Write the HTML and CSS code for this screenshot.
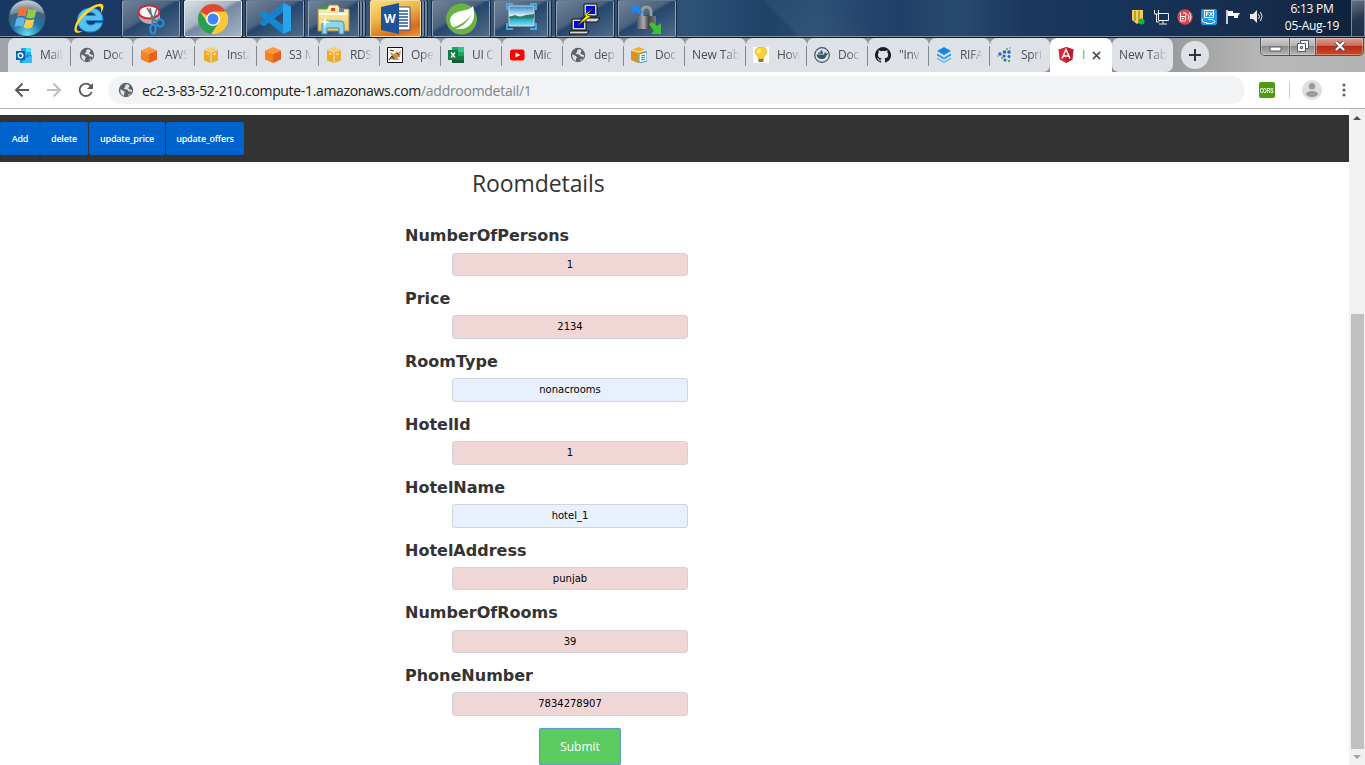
FILE: index.html
```html
<!DOCTYPE html>
<html lang="en">
<head>
<meta charset="utf-8">
<title>Roomdetails</title>
<link rel="stylesheet" href="styles.css">
</head>
<body>
<svg class="defs" width="0" height="0">
  <defs>
    <symbol id="globe" viewBox="0 0 16 16"><circle cx="8" cy="8" r="7.200" fill="#5f6368"/><path d="M2.400 7.200 5.800 9 7 10.300 6 12v2C3.400 13 1.800 10.300 2.400 7.200zM9 2l-2 1.500.3 1.300L5.600 6.500 7 7.300l2.200.2 1.600 2 3 .3-1.300 2.400-1.700-.1-.7 1.700c2.500-.5 4.200-3 4-5.600l-2-.6-1.900-1L11 5l.5-1.700z" fill="#dee1e6"/></symbol>
    <symbol id="cube" viewBox="0 0 16 16"><path d="M8 0 16 3.500 8 7 0 3.500z" fill="#fa9a3c"/><path d="M0 3.500 8 7v9l-8-3.500z" fill="#f58220"/><path d="M16 3.500 8 7v9l8-3.500z" fill="#e8601e"/></symbol>
    <symbol id="box" viewBox="0 0 16 16"><path d="M8 0 15 2.500 8 5 1 2.500z" fill="#f7cf72"/><path d="M1 3.300 7.500 5.600V16L1 13.600z" fill="#f0aa20"/><path d="M15 3.300 8.500 5.600V16L15 13.600z" fill="#edae2c"/><path d="m3 5.700 3 1v1.500l-3-1zm7 1 3-1v1.500l-3 1z" fill="#fce7af"/></symbol>
    <radialGradient id="orb" cx=".5" cy=".95" r=".9"><stop offset="0" stop-color="#62e0f5"/><stop offset=".45" stop-color="#2374a6"/><stop offset=".8" stop-color="#456078"/><stop offset="1" stop-color="#a8b5c1"/></radialGradient>
    <linearGradient id="folder" x2="0" y2="1"><stop stop-color="#fff3c0"/><stop offset="1" stop-color="#edc761"/></linearGradient>
    <linearGradient id="sky" x2="0" y2="1"><stop stop-color="#2d84c4"/><stop offset=".5" stop-color="#e1f5fb"/><stop offset=".56" stop-color="#27734f"/><stop offset=".68" stop-color="#22b1cf"/><stop offset="1" stop-color="#8be1ee"/></linearGradient>
    <linearGradient id="metal"><stop stop-color="#555"/><stop offset=".35" stop-color="#aaa"/><stop offset=".6" stop-color="#444"/><stop offset="1" stop-color="#777"/></linearGradient>
  </defs>
</svg>

<header class="taskbar">
  <div class="launch start"><svg width="40" height="37" viewBox="0 0 40 37"><circle cx="20" cy="18" r="18.500" fill="url(#orb)" stroke="#244668"/><path d="M3 15C4 4 12 1 20 1s16 4 17 13c-10-5-22-3-34 1z" fill="#fff" opacity=".3"/><path d="M12.500 8q4-3 8 0l-2 9q-4-2.500-8.500 0z" fill="#ef7336"/><path d="M21.500 9q4 2 8.500-.5l-2.500 9q-4 2-8.500 0z" fill="#92c84a"/><path d="M9.500 18.500q4-2.500 8.500 0l-2 8.500q-4-2.500-8.500 0z" fill="#65b6ed"/><path d="M19 19q4 2 8.500 0l-2.500 8.500q-4 2-8.500 0z" fill="#fccf47"/></svg></div>
  <div class="launch ie"><svg width="34" height="34" viewBox="0 0 34 34"><path d="M31 18.500H14c.3 3 2 4.500 5 4.500 2 0 3.600-.8 4.300-2.200H30.500C29 26.500 24.500 30 18.500 30 10.500 30 5.500 25 5.500 18S11 6 18.500 6C26 6 31 10.500 31 18.500zm-7.500-5c-.5-2-2.200-3-4.700-3-2.500 0-4.200 1-4.800 3z" fill="#56c0f3" stroke="#1689d4"/><path d="M29 11C33 5 32 1 27 2 18 3 6 14 3 24c-2 6 1 9 8 5-9 2-7-5-2-11C14 11 26 2 28.500 5c.6 1 .7 3 .5 6z" fill="#ffd62a"/></svg></div>
  <div class="task"><svg width="32" height="32" viewBox="0 0 32 32"><path d="M4 9v5c3 9 18 9 21 1V9z" fill="#b9a9b2"/><ellipse cx="14" cy="9" rx="10.500" ry="6.500" fill="#f6f7fb" stroke="#d62632" stroke-width="2"/><path d="m12 5 9 14M22 5 17 21M15 5l3 16" stroke="#66737f" stroke-width="1.600"/><circle cx="25" cy="20" r="3.500" fill="none" stroke="#2791dc" stroke-width="2"/><ellipse cx="18" cy="26" rx="2.600" ry="4.500" fill="none" stroke="#2791dc" stroke-width="2"/></svg></div>
  <div class="task focused"><svg width="30" height="30" viewBox="0 0 30 30"><circle cx="15" cy="15" r="15" fill="#fbc52e"/><path d="M15 15 2 7.500A15 15 0 0 1 28 7.700H15z" fill="#df4938"/><path d="M2 7.500A15 15 0 0 0 13.500 30L21 18.500 15 21l-6-3z" fill="#27a052"/><path d="M28 7.700H15L21 18.500 13.500 30A15 15 0 0 0 28 7.700z" fill="#fdc838"/><circle cx="15" cy="15" r="7" fill="#fff"/><circle cx="15" cy="15" r="5.500" fill="#4285f4"/></svg></div>
  <div class="task"><svg width="33" height="33" viewBox="0 0 33 33"><path d="m24 1 8 3.500v24L24 32z" fill="#26a5ee"/><path d="M24 1v9L5 24.500 1 22.200v-2z" fill="#1782cb"/><path d="M1 11.500 5 9l19 14v9L1 13.500z" fill="#1388d5"/></svg></div>
  <div class="task stacked"><svg width="33" height="32" viewBox="0 0 33 32"><path d="M1 6h9l2-4h9l2 4h9v22H1z" fill="url(#folder)" stroke="#a38b40"/><path d="M5 3h4v3H5z" fill="#22a641"/><path d="M14 5h4v3h-4z" fill="#df4725"/><path d="M22 6h5v3h-5z" fill="#2a91e5"/><path d="M2 11h29" stroke="#fffbe0" stroke-width="2"/><path d="M5 31V21q0-3 4-3h14q4 0 4 3v10h-5v-6H10v6z" fill="#8cd6ef" stroke="#438db4"/><path d="m8 13 1 5 5 1-5 1-1 6-1-6-5-1 5-1z" fill="#fff"/></svg></div>
  <div class="task word stacked"><svg width="30" height="31" viewBox="0 0 30 31"><path d="M16 4h13v23H16z" fill="#fff" stroke="#2b579a"/><path d="M18 8h9M18 11h9M18 14h9M18 17h9M18 20h9M18 23h9" stroke="#2b579a" stroke-width="1.300"/><path d="m0 4 18-4v31L0 27z" fill="#1e5299"/><text class="glyph" x="3" y="20">W</text></svg></div>
  <div class="task"><svg width="33" height="33" viewBox="0 0 33 33"><circle cx="16.500" cy="17" r="15.500" fill="#69b245"/><path d="M28 4C24 10 9 7 5.500 16 4 22 8 27 12 27c13 1 20-8 16-23z" fill="#fff"/><path d="M6 28q15-3 20-15-6 9-20 13z" fill="#69b245"/></svg></div>
  <div class="task stacked narrow"><svg width="31" height="27" viewBox="0 0 31 27"><path d="M3 3h25v20H3z" fill="url(#sky)" stroke="#ccd9e2"/><path d="m3 14 6-2 5 2 6-2 8-1v4H3z" fill="#347a61"/><path d="M1 7V1h6m17 0h6v6m0 13v6h-6M7 26H1v-6" fill="none" stroke="#45a7e6" stroke-width="2"/></svg></div>
  <div class="task"><svg width="32" height="32" viewBox="0 0 32 32"><g fill="#d4d4cc" stroke="#111"><path d="M15 1h13v12H15zM13 15h18l-3 4H11zM3 16h14v11H3zM1 28h19l-2 3H0z"/></g><path d="M17 3h9v8h-9zM5 18h10v7H5z" fill="#0008e8"/><path d="m24 5-9 7 2 1-9 10 14-10-4-1z" fill="#ff0" stroke="#343400" stroke-width=".7"/></svg></div>
  <div class="task"><svg width="32" height="32" viewBox="0 0 32 32"><path d="M11 15V9q0-5 4.500-5T20 9v6" fill="none" stroke="#9a9a9a" stroke-width="3"/><path d="M6 13h19v13H6z" fill="#777"/><path d="M6 13h19v13H6z" fill="url(#metal)"/><path d="M1 2h9L8 5l4 4-3 3-5-4-3 3z" fill="#2185ec"/><path d="m18 21 3-2 5 4 4-3v11H20l3-3z" fill="#35c632"/></svg></div>
  <div class="tray">
    <svg width="14" height="16" viewBox="0 0 14 16"><path d="M1 1h11v10l-6 4-5-4z" fill="#f0cf57"/><path d="M4 2v10M8 2v11" stroke="#8b6b1f"/><circle cx="10.500" cy="12.500" r="3" fill="#19af3c"/></svg>
    <svg width="16" height="16" viewBox="0 0 16 16" fill="none" stroke="#eee"><path d="M5.500 4.500h10v7h-10zM10 12v3m-4 0h8M1.500 1v4h4V1M3.500 5v8h3"/></svg>
    <svg width="16" height="16" viewBox="0 0 16 16"><circle cx="8" cy="8" r="7.700" fill="#d9454b"/><path d="M3.500 3.500V12h5V7.500h-5M5 9.500h2M6 4h3v3m2-1.500q2 2.500 0 5m1.500-7q3 4.500 0 9" fill="none" stroke="#fff"/></svg>
    <svg width="16" height="16" viewBox="0 0 16 16"><rect width="16" height="16" rx="2" fill="#2398e5"/><path d="M3.500 1.500h9v7h-9zM7.500 3H5.500v4m0-2h2M8.500 3l3 4m0-4-3 4M2 9.500l-1 2 2 2h3m-1 1h6l3-2-2-2H7" fill="none" stroke="#fff"/></svg>
    <svg width="16" height="16" viewBox="0 0 16 16"><path d="M2 1v14" stroke="#fff" stroke-width="1.500"/><path d="M3 2h5v2h7l-2 3v2H9V7H3z" fill="#fff"/></svg>
    <svg width="16" height="16" viewBox="0 0 16 16"><path d="M1 5h3l4-4v13l-4-4H1z" fill="#e8e8e8"/><path d="M9.500 5q2 3 0 5m2-7q3 4 0 9" fill="none" stroke="#e8e8e8"/></svg>
  </div>
  <div class="clock"><span>6:13 PM</span><span>05-Aug-19</span></div>
  <div class="peek"></div>
</header>

<div class="tabstrip">
  <div class="tab first"><svg class="ico" viewBox="0 0 16 16"><path d="M5 1h10v9H5z" fill="#28a8ea"/><path d="M10 1h5v4h-5z" fill="#50d9ff"/><path d="M4 8h12v8H4z" fill="#1490df"/><path d="m8 12 8-4v8H6z" fill="#35baf2"/><path d="M0 4h9v9H0z" fill="#0364b8"/><circle cx="4.500" cy="8.500" r="2.300" fill="none" stroke="#fff" stroke-width="1.400"/></svg><span class="cap">Mail</span></div>
  <div class="tab wide"><svg class="ico"><use href="#globe"/></svg><span class="cap">Doc</span></div>
  <div class="tab wide"><svg class="ico"><use href="#cube"/></svg><span class="cap">AWS</span></div>
  <div class="tab wide"><svg class="ico"><use href="#box"/></svg><span class="cap">Insta</span></div>
  <div class="tab wide"><svg class="ico"><use href="#cube"/></svg><span class="cap">S3 M</span></div>
  <div class="tab"><svg class="ico"><use href="#box"/></svg><span class="cap">RDS</span></div>
  <div class="tab"><svg class="ico" viewBox="0 0 16 16"><path d="M.5.500h15v15H.5z" fill="#fff" stroke="#111"/><path d="M2 12 5 9 2 5l5 2 3-3 1 2 3-3-1 7-3 1 3 2H8z" fill="#c79542"/><path d="m2 13 3-4 2 3m3-6 2 2M7 4 3 3" stroke="#222" fill="none"/></svg><span class="cap">Ope</span></div>
  <div class="tab"><svg class="ico" viewBox="0 0 16 16"><path d="M4 0h12v16H4z" fill="#21a366"/><path d="M10 0h6v5h-6z" fill="#33c481"/><path d="M4 10h12v6H4z" fill="#185c37"/><path d="M10 9h6v4h-6z" fill="#107c41"/><path d="M0 3h10v10H0z" fill="#107c41"/><path d="m3 5.500 4 5m0-5-4 5" stroke="#fff" stroke-width="1.500"/></svg><span class="cap">UI C</span></div>
  <div class="tab"><svg class="ico" viewBox="0 0 16 16"><rect x="1" y="2.500" width="14.500" height="11" rx="2.500" fill="#f00"/><path d="m6.500 5.500 5 2.500-5 2.500z" fill="#fff"/></svg><span class="cap">Mic</span></div>
  <div class="tab"><svg class="ico"><use href="#globe"/></svg><span class="cap">dep</span></div>
  <div class="tab"><svg class="ico" viewBox="0 0 16 16"><path d="M0 3 8 0l7 3v10l-7 3-8-3z" fill="#f3ae2e"/><path d="m0 3 7 2v11l-7-3z" fill="#dd9120"/><path d="m0 3 7 2 8-2" stroke="#fff2c8" fill="none"/><path d="m8 7 8-2v9l-8 2z" fill="#fff" stroke="#3794ca"/><path d="m10 9 4-1m-4 3 4-1m-4 3 4-1" stroke="#277bb4"/></svg><span class="cap">Doc</span></div>
  <div class="tab"><span class="cap long">New Tab</span></div>
  <div class="tab"><svg class="ico" viewBox="0 0 16 16"><path d="M0 0h16v16H0z" fill="#fff"/><path d="M8 0c7 0 7 7 3 9l-.5 3h-5L5 9C0 6 2 0 8 0z" fill="#ffd22c" stroke="#d89a0f" stroke-width=".6"/><path d="M5.500 12h5v3h-5z" fill="#777"/><ellipse cx="6" cy="4" rx="2" ry="2.500" fill="#fff27a"/></svg><span class="cap">How</span></div>
  <div class="tab"><svg class="ico" viewBox="0 0 16 16"><circle cx="8" cy="8" r="7.300" fill="#dee1e6" stroke="#38566a" stroke-width="1.200"/><path d="M2.500 7.500H10l1-3 1 2 2.500-.5-2 2.200C11.500 13.500 3 13.500 2.500 7.500zM4 5.500h5v1.300H4zM6.500 3.500h2v2h-2z" fill="#38566a"/></svg><span class="cap">Doc</span></div>
  <div class="tab"><svg class="ico" viewBox="0 0 16 16"><path fill="#1b1f23" d="M8 0a8 8 0 0 0-2.530 15.590c.4.070.55-.17.55-.38v-1.490c-2.010.37-2.530-.49-2.690-.94-.09-.23-.48-.94-.82-1.130-.28-.15-.68-.52-.01-.53.630-.01 1.080.58 1.230.82.720 1.210 1.870.87 2.330.66.070-.52.280-.87.510-1.070-1.780-.2-3.640-.89-3.640-3.950 0-.87.310-1.590.82-2.150-.08-.2-.36-1.020.08-2.120 0 0 .67-.21 2.200.82a7.500 7.500 0 0 1 4 0c1.530-1.040 2.200-.82 2.200-.82.440 1.100.160 1.920.080 2.120.51.560.82 1.270.82 2.150 0 3.070-1.870 3.750-3.650 3.950.29.250.54.730.54 1.480v2.200c0 .210.150.460.550.38A8 8 0 0 0 8 0z"/></svg><span class="cap">"Inv</span></div>
  <div class="tab"><svg class="ico" viewBox="0 0 16 16"><path d="m8 0 7 4-7 4-7-4z" fill="#1686ef"/><path d="m1 6.500 7 4 7-4v2l-7 4-7-4z" fill="#2b96f5"/><path d="m1 10.500 7 4 7-4v1.500l-7 4-7-4z" fill="#5bb4fb"/></svg><span class="cap">RIFA</span></div>
  <div class="tab last"><svg class="ico" viewBox="0 0 16 16"><g fill="#1b68c7"><circle cx="3" cy="7" r="1.700"/><circle cx="7.500" cy="5" r="1.800"/><circle cx="12" cy="5" r="1.800"/><circle cx="7" cy="9" r="1.600"/><circle cx="12" cy="9.500" r="1.500"/><circle cx="8" cy="13" r="1.500"/></g><g fill="#64a839"><circle cx="1" cy="9" r=".8"/><circle cx="10" cy="2" r="1"/><circle cx="13" cy="1" r=".8"/><circle cx="5" cy="11" r="1"/><circle cx="12" cy="14" r="1.200"/></g></svg><span class="cap">Spri</span></div>
  <div class="tab active"><svg class="ico" viewBox="0 0 16 16"><path d="m8 0 7.500 2.500-1.200 10L8 16l-6.300-3.500-1.200-10z" fill="#dd2335"/><path d="m8 0 7.500 2.500-1.200 10L8 16z" fill="#bd1c2c"/><path d="m4 11.500 4-9 4 9M5.500 9h5" fill="none" stroke="#fff" stroke-width="1.500"/></svg><span class="cap tiny">I</span><svg class="close" width="9" height="9" viewBox="0 0 10 10"><path d="m1 1 8 8m0-8-8 8" stroke="#44484c" stroke-width="1.700"/></svg></div>
  <div class="tab idle"><span class="cap long">New Tab</span></div>
  <div class="newtab"><svg width="12" height="12" viewBox="0 0 12 12"><path d="M6 0v12M0 6h12" stroke="#303438" stroke-width="2"/></svg></div>
  <div class="winbtns">
    <div class="win min"><svg width="13" height="6" viewBox="0 0 13 6"><path d="M1 1h11v4H1z" fill="#fff" stroke="#555a66"/></svg></div>
    <div class="win max"><svg width="12" height="12" viewBox="0 0 12 12"><path d="M3.500.5h8v8h-8z" fill="#fff" stroke="#555a66"/><path d="M.5 3.500h8v8h-8z" fill="#fff" stroke="#555a66"/><path d="M3.500 6.500h2v2h-2z" fill="#ccc" stroke="#555a66"/></svg></div>
    <div class="win exit"><svg width="12" height="10" viewBox="0 0 12 10"><path d="m2 1 8 8m0-8L2 9" stroke="#50405b" stroke-width="4"/><path d="m2 1 8 8m0-8L2 9" stroke="#fff" stroke-width="2.300"/></svg></div>
  </div>
</div>

<div class="toolbar">
  <svg class="back" width="16" height="16" viewBox="0 0 16 16" fill="none" stroke="#55595d" stroke-width="1.900"><path d="M15 8H2m6.500-6.500L2 8l6.500 6.500"/></svg>
  <svg class="fwd" width="16" height="16" viewBox="0 0 16 16" fill="none" stroke="#bbbdbf" stroke-width="1.900"><path d="M1 8h13M7.500 1.500 14 8l-6.500 6.500"/></svg>
  <svg class="reload" width="16" height="16" viewBox="0 0 16 16"><path d="M13.700 10A6.200 6.200 0 1 1 12.500 3.700L14 5.500" fill="none" stroke="#55595d" stroke-width="1.900"/><path d="M15 1v6H9z" fill="#55595d"/></svg>
  <div class="omnibox"><svg class="site"><use href="#globe"/></svg><span class="host">ec2-3-83-52-210.compute-1.amazonaws.com</span><span class="path">/addroomdetail/1</span></div>
  <div class="cors"><span class="corstext">CORS</span></div>
  <div class="rule"></div>
  <svg class="avatar" width="20" height="20" viewBox="0 0 20 20"><circle cx="10" cy="10" r="10" fill="#dedede"/><circle cx="10" cy="6.200" r="3.200" fill="#9b9b9b"/><ellipse cx="10" cy="14" rx="6" ry="2.900" fill="#9b9b9b"/></svg>
  <svg class="menu" width="4" height="14" viewBox="0 0 4 14" fill="#5f6368"><circle cx="2" cy="2" r="1.600"/><circle cx="2" cy="7" r="1.600"/><circle cx="2" cy="12" r="1.600"/></svg>
</div>

<div class="viewport">
  <main class="page">
    <nav class="navbar">
      <button class="btn add">Add</button><button class="btn delete">delete</button><button class="btn price">update_price</button><button class="btn offers">update_offers</button>
    </nav>
    <h1 class="title">Roomdetails</h1>
    <form class="form">
      <div class="field"><label>NumberOfPersons</label><div class="control">1</div></div>
      <div class="field"><label>Price</label><div class="control">2134</div></div>
      <div class="field"><label>RoomType</label><div class="control autofill">nonacrooms</div></div>
      <div class="field"><label>HotelId</label><div class="control">1</div></div>
      <div class="field"><label>HotelName</label><div class="control autofill">hotel_1</div></div>
      <div class="field"><label>HotelAddress</label><div class="control">punjab</div></div>
      <div class="field"><label>NumberOfRooms</label><div class="control">39</div></div>
      <div class="field"><label>PhoneNumber</label><div class="control">7834278907</div></div>
      <button class="submit" type="button">Submit</button>
    </form>
  </main>
  <div class="scrollbar">
    <svg width="8" height="4" viewBox="0 0 8 4"><path d="m0 4 4-4 4 4z" fill="#505050"/></svg>
    <div class="thumb"></div>
    <svg width="8" height="4" viewBox="0 0 8 4"><path d="m0 0 4 4 4-4z" fill="#a3a3a3"/></svg>
  </div>
</div>
</body>
</html>
```
FILE: styles.css
```css
* { box-sizing: border-box; }
html, body { margin: 0; height: 765px; overflow: hidden; }
body { display: flex; flex-direction: column; background: #fff; font-family: "Open Sans", "Noto Sans", sans-serif; }
svg { display: block; flex: none; }
.defs { position: absolute; }

/* Taskbar */
.taskbar {
  display: flex; flex: none; height: 38px; padding-left: 7px;
  border-bottom: 1px solid #101820;
  box-shadow: inset 0 -1px #8291a3;
  background: linear-gradient(45deg, transparent 57%, #ffffff0c 57.100%, transparent 63%),
    linear-gradient(90deg, #183862 0, #1b3963 9%, #3a5572 20%, #36536f 45%, #2c5278 51%, #1e4168 56%, #2b4d74 60%, #203f68 66%, #294a70 70%, #1c385e 75%, #16335a 82%, #172d4d 92%, #0e2039 100%);
}
.launch { display: flex; align-items: center; justify-content: center; height: 37px; }
.start { width: 40px; }
.ie { width: 34px; margin-left: 25px; margin-right: 16px; }
.task {
  display: flex; align-items: center; justify-content: center;
  width: 58px; height: 37px; margin-right: 4px;
  border: 1px solid #93a2b4; border-top-color: #63788f; border-radius: 2px;
  background: linear-gradient(150deg, #718398 0, #4c637f 42%, #25466d 48%, #4f6b88 100%);
  box-shadow: 0 0 0 1px #142a45;
}
.focused { background: linear-gradient(150deg, #d9dfe5 0, #a9b4c1 42%, #748aa3 49%, #a5b4c2 100%); border-color: #dce4ea; }
.stacked { width: 51px; margin-right: 11px; box-shadow: 1px 0 #152b46, 3px 0 #71869c, 4px 0 #152b46, 6px 0 #71869c, 7px 0 #152b46; }
.narrow { width: 54px; margin-right: 8px; padding-bottom: 4px; box-shadow: 1px 0 #152b46, 3px 0 #71869c, 4px 0 #152b46; }
.word { border-color: #f5dda0; background: linear-gradient(160deg, #fbdf78 0, #efb64d 40%, #d66c1c 78%, #eb983d 100%); }
.glyph { font: bold 12px "Open Sans", sans-serif; fill: #fff; }
.tray { display: flex; align-items: center; gap: 8px; height: 34px; margin-left: auto; margin-right: 18px; }
.clock { display: flex; flex-direction: column; align-items: center; width: 58px; color: #fff; font-size: 12px; line-height: 17px; letter-spacing: -.25px; white-space: nowrap; }
.peek { width: 14px; height: 37px; margin-left: 10px; border: 1px solid #7d8897; background: linear-gradient(160deg, #667286, #26384f 50%, #1b2c45); }

/* Tab strip */
.tabstrip { display: flex; flex: none; height: 34px; padding-left: 8px; background: linear-gradient(90deg, #9fa4ac 0, #8d939c 84%, #a5a5a5 88%, #b9b9b9 93%, #b2b2b2 100%); }
.tab { position: relative; display: flex; align-items: center; width: 61px; padding-left: 7px; background: #dee1e6; border-radius: 7px 7px 0 0; overflow: hidden; }
.tab::after { content: ""; position: absolute; right: 0; top: 8px; width: 1px; height: 20px; background: #858a91; }
.first { width: 63px; padding-left: 8px; }
.wide { width: 62px; padding-left: 8px; }
.ico { width: 16px; height: 16px; }
.cap { width: 23px; margin-left: 8px; color: #4c5056; font-size: 12px; letter-spacing: -.3px; line-height: 18px; white-space: nowrap; mask-image: linear-gradient(90deg, #000 45%, transparent 100%); }
.long { width: 48px; margin-left: 0; letter-spacing: -.1px; mask-image: linear-gradient(90deg, #000 65%, transparent 100%); }
.last { width: 60px; border-radius: 7px 7px 7px 0; }
.last::after, .active::after, .idle::after { display: none; }
.active { width: 62px; padding-left: 8px; background: #fff; }
.tiny { width: 4px; margin-left: 8px; color: #a87f6c; mask-image: none; }
.close { margin-left: 6px; }
.idle { border-radius: 7px; width: 61px; }
.newtab { display: flex; align-items: center; justify-content: center; width: 28px; height: 28px; margin: 3px 0 0 8px; border-radius: 50%; background: #dee1e6; }
.winbtns { display: flex; width: 104px; height: 18px; margin-left: auto; margin-right: 1px; border: 1px solid #4e5155; border-top: 0; border-radius: 0 0 5px 5px; overflow: hidden; }
.win { display: flex; align-items: center; justify-content: center; background: linear-gradient(#d0d0d0 0, #b1b1b1 45%, #898989 50%, #b8b8b8); box-shadow: inset 0 0 0 1px #e1e1e166; }
.min { width: 28px; padding-top: 4px; }
.max { width: 27px; padding-bottom: 2px; border: solid #55585b; border-width: 0 1px; }
.exit { flex: 1; padding-bottom: 2px; background: linear-gradient(#dda094 0, #cb6957 45%, #b52c14 50%, #cf4b26 100%); }

/* Address bar */
.toolbar { display: flex; align-items: center; flex: none; height: 37px; padding-left: 14px; border-bottom: 1px solid #b3b3b5; background: #fff; }
.fwd, .reload { margin-left: 16px; }
.omnibox { display: flex; align-items: center; width: 1137px; height: 28px; margin-left: 14px; padding-left: 10px; border-radius: 14px; background: #f1f3f4; font-size: 14px; white-space: nowrap; }
.site { width: 16px; height: 16px; margin-right: 8px; }
.host { width: 279px; color: #202124; letter-spacing: -.33px; }
.path { color: #80868b; letter-spacing: -.28px; }
.cors { display: flex; align-items: center; justify-content: center; width: 16px; height: 16px; margin-left: 14px; border-radius: 2px; background: #4b9c10; }
.corstext { color: #fff; font: bold 8px "Liberation Sans", sans-serif; transform: scaleX(.6); }
.rule { width: 1px; height: 16px; margin: 0 12px 0 14px; background: #c9cbcd; }
.menu { margin-left: 20px; }

/* Page */
.viewport { display: flex; flex: 1; min-height: 0; }
.page { flex: 1; padding-top: 6px; }
.navbar { display: flex; height: 47px; padding-top: 7px; background: #333; }
.btn { height: 33px; padding: 0; border: 0; border-radius: 2px; background: #0062cc; color: #fff; font: 600 9px "Open Sans", sans-serif; letter-spacing: -.2px; white-space: nowrap; }
.add { width: 40px; }
.delete { width: 48px; margin-right: 1px; }
.price { width: 76px; margin-right: 1px; }
.offers { width: 78px; }
.title { width: 132px; margin: 4px 0 0 472px; color: #333; font: 400 23px/34px "Open Sans", sans-serif; letter-spacing: -.1px; white-space: nowrap; }
.form { width: 283px; margin: 22.600px 0 0 405px; }
.field { display: flex; flex-direction: column; height: 62.840px; }
.field label { height: 30px; padding-top: .9px; color: #333; font: bold 16px/26px "DejaVu Sans", sans-serif; }
.control { width: 236px; height: 23.650px; margin-left: 47px; border: 1px solid #ced4da; border-radius: 3px; background: #f1d6d6; color: #000; font: 10px/22px "DejaVu Sans", sans-serif; text-align: center; }
.autofill { background: #e8f0fe; }
.submit { display: block; width: 82px; height: 37px; margin: 2.700px 0 0 134px; padding: 0; border: 1px solid #5b9fc5; border-radius: 2px; background: #5ccb5f; box-shadow: inset 0 0 0 1px #5bb79044, 0 0 1px #78aef5; color: #fff; font: 500 12px "Open Sans", sans-serif; }
.scrollbar { display: flex; flex-direction: column; align-items: center; width: 16px; padding: 7px 0 6px; background: #f1f1f1; }
.thumb { width: 13px; height: 435px; margin: 194px 0 6px; background: #c1c1c1; }
```
